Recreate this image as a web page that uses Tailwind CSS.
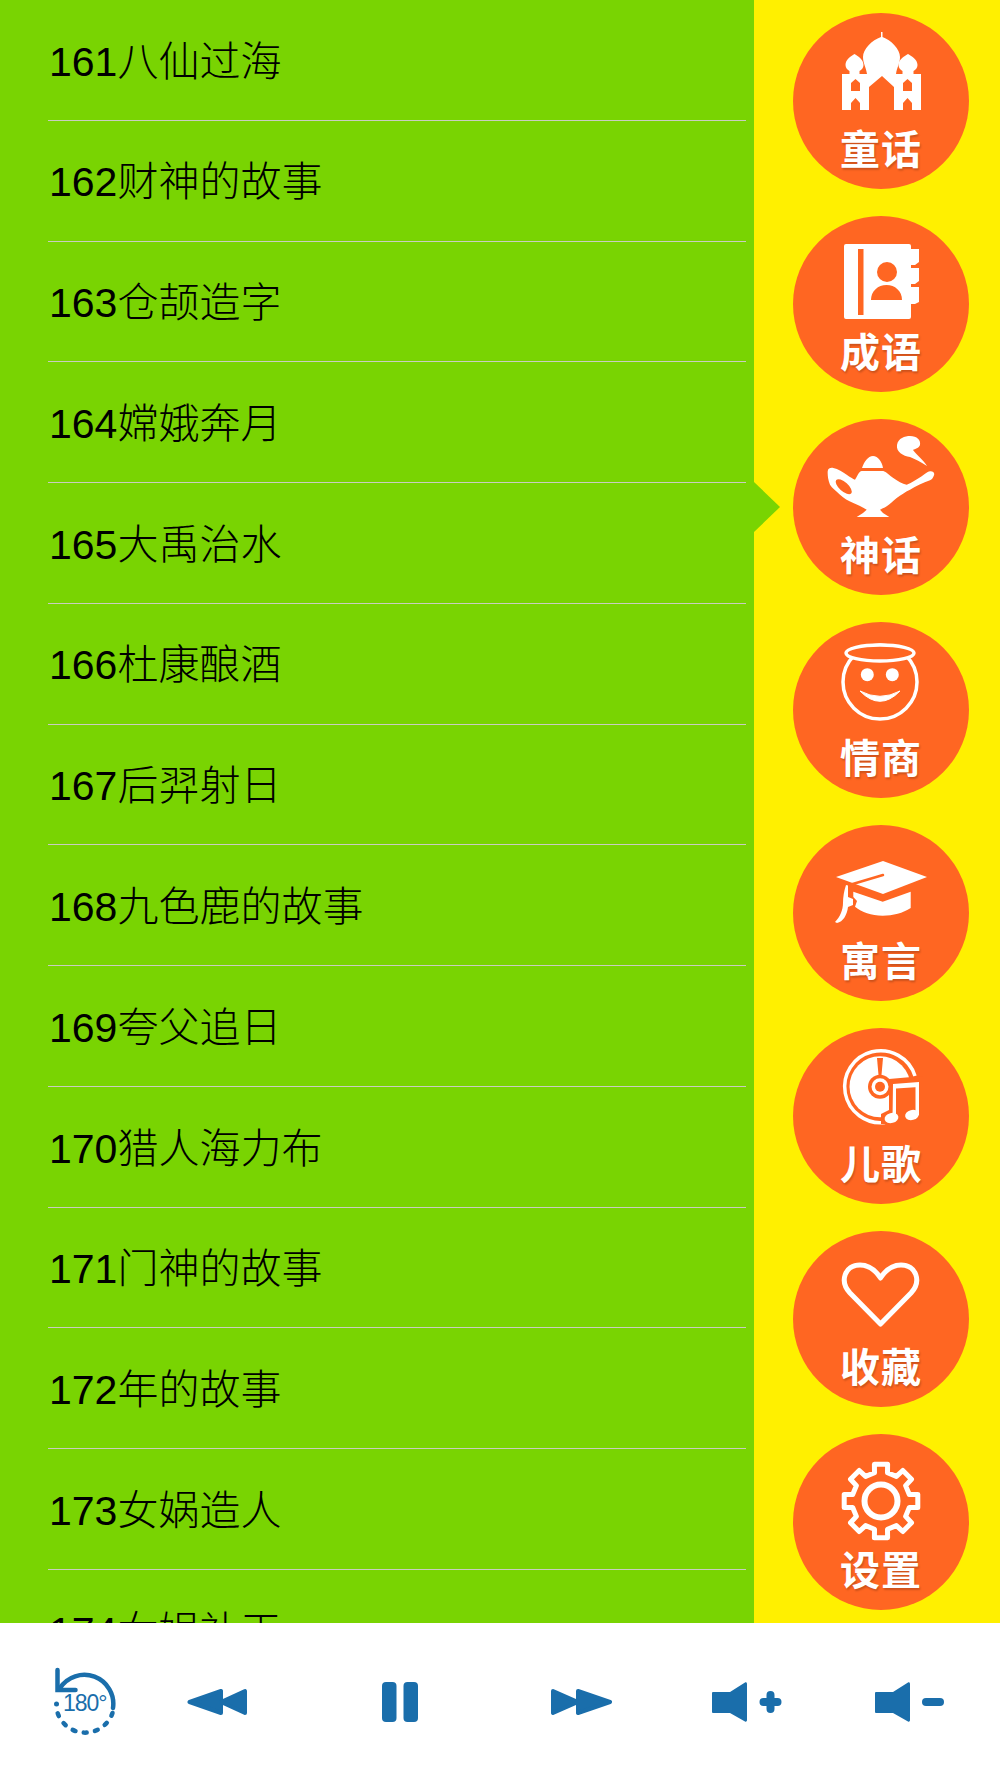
<!DOCTYPE html>
<html lang="zh">
<head>
<meta charset="utf-8">
<script src="https://cdn.jsdelivr.net/npm/@tailwindcss/browser@4"></script>
</head>
<body class="font-['Liberation_Sans','Noto_Sans_CJK_SC',sans-serif]">
<div class="w-[1000px] h-[1778px] flex flex-col overflow-hidden">
  <main class="relative h-[1623px] flex overflow-hidden">
    <ul class="w-[754px] shrink-0 bg-[#79d402] pl-[48px] pr-[8px] text-[41px] font-light text-black">
      <li class="h-[120.77px] flex items-center pl-px pt-[6px] pb-px border-b border-[#c9cdc0]">161八仙过海</li>
      <li class="h-[120.77px] flex items-center pl-px pt-[6px] pb-px border-b border-[#c9cdc0]">162财神的故事</li>
      <li class="h-[120.77px] flex items-center pl-px pt-[6px] pb-px border-b border-[#c9cdc0]">163仓颉造字</li>
      <li class="h-[120.77px] flex items-center pl-px pt-[6px] pb-px border-b border-[#c9cdc0]">164嫦娥奔月</li>
      <li class="h-[120.77px] flex items-center pl-px pt-[6px] pb-px border-b border-[#c9cdc0]">165大禹治水</li>
      <li class="h-[120.77px] flex items-center pl-px pt-[6px] pb-px border-b border-[#c9cdc0]">166杜康酿酒</li>
      <li class="h-[120.77px] flex items-center pl-px pt-[6px] pb-px border-b border-[#c9cdc0]">167后羿射日</li>
      <li class="h-[120.77px] flex items-center pl-px pt-[6px] pb-px border-b border-[#c9cdc0]">168九色鹿的故事</li>
      <li class="h-[120.77px] flex items-center pl-px pt-[6px] pb-px border-b border-[#c9cdc0]">169夸父追日</li>
      <li class="h-[120.77px] flex items-center pl-px pt-[6px] pb-px border-b border-[#c9cdc0]">170猎人海力布</li>
      <li class="h-[120.77px] flex items-center pl-px pt-[6px] pb-px border-b border-[#c9cdc0]">171门神的故事</li>
      <li class="h-[120.77px] flex items-center pl-px pt-[6px] pb-px border-b border-[#c9cdc0]">172年的故事</li>
      <li class="h-[120.77px] flex items-center pl-px pt-[6px] pb-px border-b border-[#c9cdc0]">173女娲造人</li>
      <li class="h-[120.77px] flex items-center pl-px pt-[6px] pb-px border-b border-[#c9cdc0]">174女娲补天</li>
    </ul>
    <nav class="relative flex-1 bg-[#fff000] flex flex-col items-center gap-[27px] pt-[13px] pl-[8px] text-[40px] leading-[40px] font-bold tracking-[1px] text-white [text-shadow:1px_2px_2px_rgba(0,0,0,0.2)]">
      <div class="relative w-[176px] h-[176px] shrink-0 rounded-full bg-[#ff6622] flex justify-center pt-[117px]">
        <svg class="absolute inset-0" viewBox="0 0 176 176" width="176" height="176" fill="#fff">
          <path d="M88 19h1.500v5C98 27 107 36 107 44c0 6-3 10-4 17H74c-1-7-4-11-4-17 0-8 9-17 18-20z"/>
          <path d="M61.500 41c3 2 9 5 9 11 0 3-2 5-4 6v4h-10v-4c-2-1-4-3-4-6 0-6 6-9 9-11z"/>
          <path d="M115 41c3 2 9.500 5 9.500 11 0 3-2 5-4 6v4h-11v-4c-2-1-4-3-4-6 0-6 6.500-9 9.500-11z"/>
          <path fill-rule="evenodd" d="M49 61h79v36h-9v-7l-4.500-5-4.500 5v7h-9V74L89 63 76 74v23H67v-7l-4.500-5-4.500 5v7h-9zM62.500 66l-4.500 4v8h9v-8zM114.500 66l-4.500 4v8h9v-8z"/>
        </svg>
        <span>童话</span>
      </div>
      <div class="relative w-[176px] h-[176px] shrink-0 rounded-full bg-[#ff6622] flex justify-center pt-[117px]">
        <svg class="absolute inset-0" viewBox="0 0 176 176" width="176" height="176" fill="#fff">
          <path d="M53 28h63a2 2 0 0 1 2 2v3h8v13l-4 3h-4v3h8v13l-4 3h-4v3h8v15l-4 2h-4v13a2 2 0 0 1-2 2H53a2 2 0 0 1-2-2V30a2 2 0 0 1 2-2z"/>
          <rect x="65" y="33" width="5.500" height="66" fill="#ff6622"/>
          <circle cx="94" cy="56" r="10" fill="#ff6622"/>
          <path d="M78 84c0-9 7-15 15.500-15S109 75 109 84z" fill="#ff6622"/>
        </svg>
        <span>成语</span>
      </div>
      <div class="relative w-[176px] h-[176px] shrink-0 rounded-full bg-[#ff6622] flex justify-center pt-[117px]">
        <svg class="absolute inset-0" viewBox="0 0 176 176" width="176" height="176" fill="#fff">
          <path d="M34.700 52.300C35 49 38 48.500 40.300 49C45 50 50 53 53.700 55.700C57 58 60 60 62 60.700C64 58 66 52 68.700 52H90.300C94 53 97 57 100.300 59C105 62 109 65 113.700 65.700C119 64 124 60 128.700 57.300C132 55 134.500 52.300 137 52.300C140 52 142 54 141 56.300C140 59 139 60.500 137 61.300C130 64 123 67 117 70.700C112 73 108 76 103.700 79C100 82 97 85 93.700 87.300C91 89 88.500 90 87 90.700L90 94L96.300 98H63.700L70 94L73.700 90.700C69 88 65 86 60.300 84C55 82 51 79 47 75.700C43 72 39 69 37 65.700C35 61 34.500 56 34.700 52.300z"/>
          <ellipse cx="50.700" cy="67.700" rx="10" ry="4.500" transform="rotate(42 50.700 67.700)" fill="#ff6622"/>
          <path d="M69 49c2-6 6-12 11-12s9 6 10 12z"/>
          <path d="M104 26C105 19 112 17 117 17C124 17 128 21 127 26C126 29 122 30 120 31C124 36 131 42 134 47C128 43 122 40 117 38C110 37 103 33 104 26z"/>
        </svg>
        <span>神话</span>
      </div>
      <div class="relative w-[176px] h-[176px] shrink-0 rounded-full bg-[#ff6622] flex justify-center pt-[117px]">
        <svg class="absolute inset-0" viewBox="0 0 176 176" width="176" height="176" fill="none" stroke="#fff" stroke-width="3.500">
          <circle cx="87" cy="60" r="37"/>
          <ellipse cx="87" cy="31" rx="34" ry="8" fill="#ff6622"/>
          <circle cx="74.300" cy="52.700" r="6.500" fill="#fff" stroke="none"/>
          <circle cx="99.300" cy="52.700" r="6.500" fill="#fff" stroke="none"/>
          <path d="M67 69Q87 79.600 107 69Q87 89.600 67 69z" fill="#fff" stroke-width="1"/>
        </svg>
        <span>情商</span>
      </div>
      <div class="relative w-[176px] h-[176px] shrink-0 rounded-full bg-[#ff6622] flex justify-center pt-[117px]">
        <svg class="absolute inset-0" viewBox="0 0 176 176" width="176" height="176" fill="#fff">
          <path d="M43 52L90 36L134 52L90 69z"/>
          <path d="M90 50L53 61" stroke="#ff6622" stroke-width="2.500" stroke-linecap="round"/>
          <path d="M60.300 66.700L89.700 76.700L117.700 66.700V83C110 88 100 90.700 89.700 90.700C78 90.700 69 87 62 81.700L64 76L60.300 72z"/>
          <path d="M53 60L55 60.500L55 72L60 74L60 80L55 82C54 90 50 97 44 98L42 97C47 92 50 85 50 78C50 72 51 66 53 60z"/>
        </svg>
        <span>寓言</span>
      </div>
      <div class="relative w-[176px] h-[176px] shrink-0 rounded-full bg-[#ff6622] flex justify-center pt-[117px]">
        <svg class="absolute inset-0" viewBox="0 0 176 176" width="176" height="176" fill="#fff">
          <path d="M122 48A36 36 0 1 0 92 94.500" fill="none" stroke="#fff" stroke-width="3.500"/>
          <circle cx="87" cy="58.700" r="30.500"/>
          <path d="M84 30h6l-1.500 17h-3z" fill="#ff6622"/>
          <circle cx="87" cy="58.700" r="12" fill="#ff6622"/>
          <circle cx="87" cy="58.700" r="8.500" fill="#fff"/>
          <circle cx="87" cy="58.700" r="5" fill="#ff6622"/>
          <path d="M96 51L130 48V96H88V86L96 82z" fill="#ff6622"/>
          <path d="M100 56L126 54V59L103 60.500V90H99.500z"/>
          <path d="M122.500 55H126V87H122.500z"/>
          <ellipse cx="98.500" cy="90" rx="7" ry="5" transform="rotate(-15 98.500 90)"/>
          <ellipse cx="119" cy="87" rx="7" ry="5" transform="rotate(-15 119 87)"/>
        </svg>
        <span>儿歌</span>
      </div>
      <div class="relative w-[176px] h-[176px] shrink-0 rounded-full bg-[#ff6622] flex justify-center pt-[117px]">
        <svg class="absolute inset-0" viewBox="0 0 176 176" width="176" height="176" fill="none" stroke="#fff" stroke-width="5" stroke-linejoin="round">
          <path d="M87.500 93L57 62C46 50 52 34 67 34C76 34 83 40 87.500 47C92 40 99 34 108 34C123 34 129 50 118 62z"/>
        </svg>
        <span>收藏</span>
      </div>
      <div class="relative w-[176px] h-[176px] shrink-0 rounded-full bg-[#ff6622] flex justify-center pt-[117px]">
        <svg class="absolute inset-0" viewBox="0 0 176 176" width="176" height="176" fill="none" stroke="#fff" stroke-width="5" stroke-linejoin="round">
          <g transform="translate(88 67)">
            <path d="M-6.500-28.300L-6.600-36.800L6.600-36.800L6.500-28.300L15.400-24.600L21.800-30.500L30.500-21.800L24.600-15.400L28.300-6.500L36.800-6.600L36.800 6.600L28.300 6.500L24.600 15.400L30.500 21.800L21.800 30.500L15.400 24.600L6.500 28.300L6.600 36.800L-6.600 36.800L-6.500 28.300L-15.400 24.600L-21.800 30.500L-30.500 21.800L-24.600 15.400L-28.300 6.500L-36.800 6.600L-36.800-6.600L-28.300-6.500L-24.600-15.400L-30.500-21.800L-21.800-30.500L-15.400-24.600z"/>
            <circle r="16.500" stroke-width="6"/>
          </g>
        </svg>
        <span>设置</span>
      </div>
    </nav>
    <div class="absolute left-[754px] top-[482px] w-[26px] h-[50px] bg-[#79d402] [clip-path:polygon(0_0,100%_50%,0_100%)]"></div>
  </main>
  <footer class="h-[155px] bg-white flex items-center pl-[53px] pt-[3px]">
    <div class="relative w-[63px] h-[70px] shrink-0">
      <svg class="absolute inset-0" viewBox="0 0 63 70" width="63" height="70" fill="none" stroke="#1a6eab" stroke-linecap="round">
        <path d="M60 41A29 29 0 0 0 7 21" stroke-width="4.500"/>
        <path d="M4.500 3v20h18" stroke-width="4.500"/>
        <path d="M59.500 46A29 29 0 0 1 4 44" stroke-width="4.500" stroke-dasharray="3 8.400"/>
        <circle cx="3.500" cy="37" r="2.500" fill="#1a6eab" stroke="none"/>
      </svg>
      <span class="absolute left-[10px] top-[24px] text-[23px] leading-[24px] tracking-[-1px] text-[#1a6eab]">180°</span>
    </div>
    <svg class="ml-[71px] shrink-0" width="60" height="30" viewBox="0 0 60 30" fill="#1a6eab" stroke="#1a6eab" stroke-width="4" stroke-linejoin="round">
      <path d="M2.500 15L34 4V26z"/>
      <path d="M34 15L58 4V26z"/>
    </svg>
    <svg class="ml-[135px] shrink-0" width="36" height="40" viewBox="0 0 36 40" fill="#1a6eab">
      <rect width="14.500" height="40" rx="4"/>
      <rect x="21.500" width="14.500" height="40" rx="4"/>
    </svg>
    <svg class="ml-[133px] shrink-0" width="61" height="30" viewBox="0 0 61 30" fill="#1a6eab" stroke="#1a6eab" stroke-width="4" stroke-linejoin="round">
      <path d="M2 4L27 15L2 26z"/>
      <path d="M27 4L59 15L27 26z"/>
    </svg>
    <svg class="ml-[100px] shrink-0" width="70" height="40" viewBox="0 0 70 40" fill="#1a6eab">
      <path d="M1 10h17L33 0.500c1-.5 2 0 2 1.500v36c0 1.500-1 2-2 1.500L18 31H1a1 1 0 0 1-1-1V11a1 1 0 0 1 1-1z"/>
      <path d="M58.500 13v14M51.500 20h14" stroke="#1a6eab" stroke-width="8" stroke-linecap="round"/>
    </svg>
    <svg class="ml-[93px] shrink-0" width="70" height="40" viewBox="0 0 70 40" fill="#1a6eab">
      <path d="M1 10h17L33 0.500c1-.5 2 0 2 1.500v36c0 1.500-1 2-2 1.500L18 31H1a1 1 0 0 1-1-1V11a1 1 0 0 1 1-1z"/>
      <path d="M51 20h14" stroke="#1a6eab" stroke-width="8" stroke-linecap="round"/>
    </svg>
  </footer>
</div>
</body>
</html>
